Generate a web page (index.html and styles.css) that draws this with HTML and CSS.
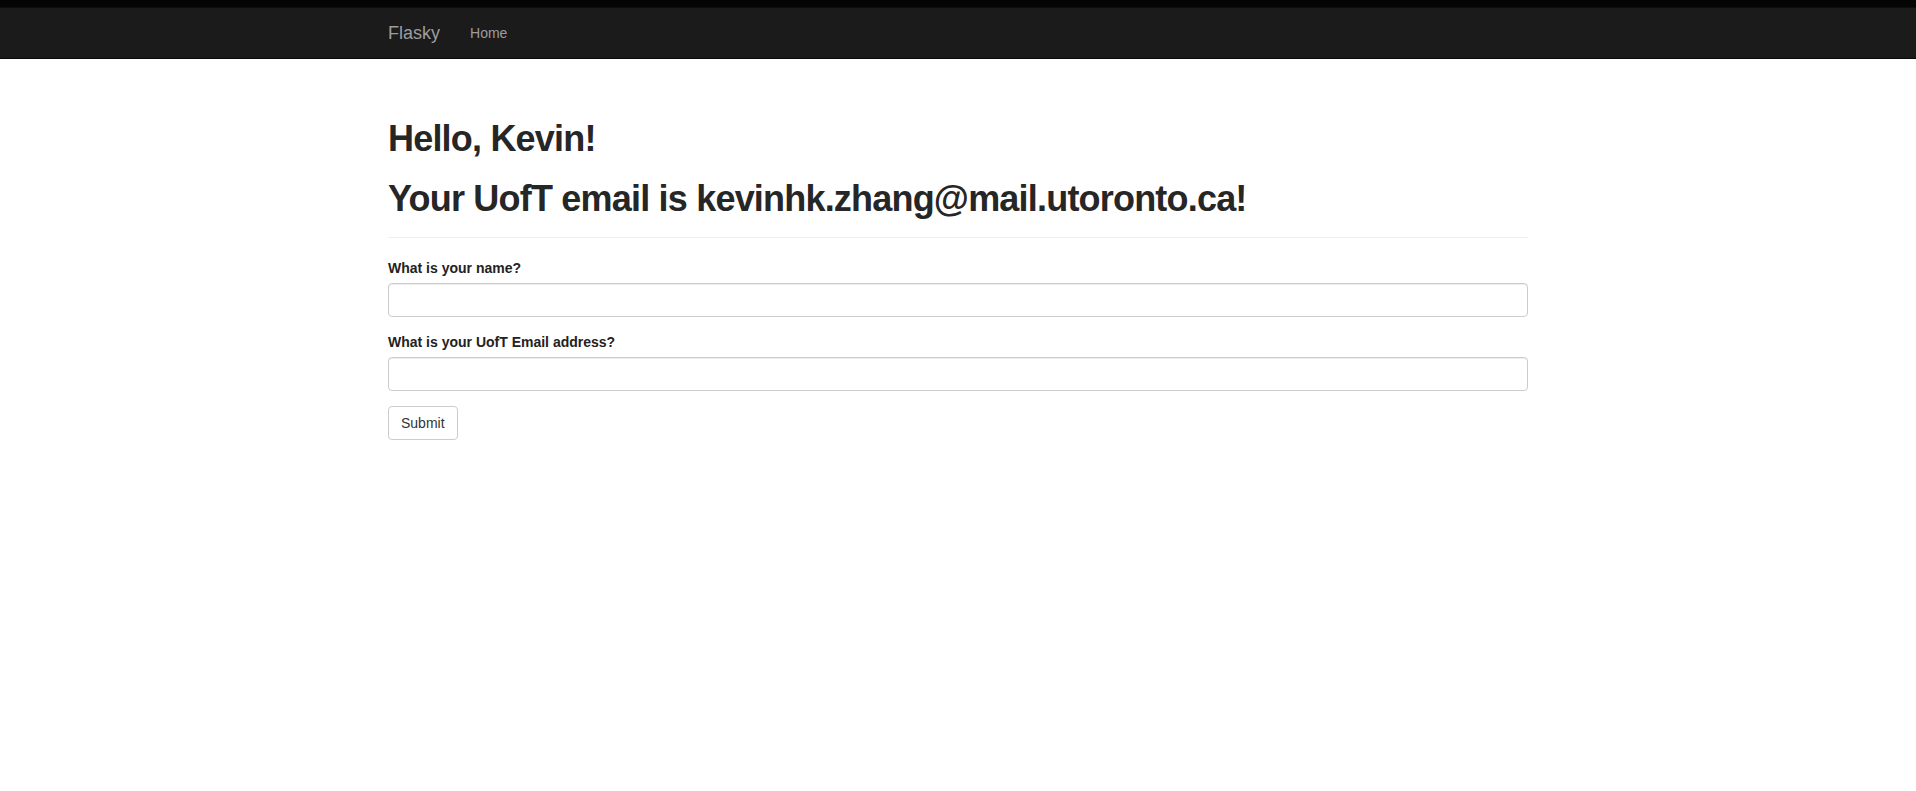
FILE: index.html
```html
<!DOCTYPE html>
<html lang="en">
<head>
<meta charset="utf-8">
<title>Flasky</title>
<link rel="stylesheet" href="styles.css">
</head>
<body>
<div class="topband"></div>
<nav class="navbar">
  <div class="container navbar-inner">
    <a class="brand" href="#">Flasky</a>
    <ul class="nav">
      <li><a href="#">Home</a></li>
    </ul>
  </div>
</nav>
<main class="container content">
  <div class="page-header">
    <h1>Hello, Kevin!</h1>
    <h1>Your UofT email is kevinhk.zhang@mail.utoronto.ca!</h1>
  </div>
  <form class="form">
    <div class="form-group">
      <label class="label" for="name">What is your name?</label>
      <input class="form-control" id="name" type="text">
    </div>
    <div class="form-group">
      <label class="label" for="email">What is your UofT Email address?</label>
      <input class="form-control" id="email" type="text">
    </div>
    <div class="actions">
      <button class="btn" type="button">Submit</button>
    </div>
  </form>
</main>
</body>
</html>
```

FILE: styles.css
```css
* { box-sizing: border-box; }
html, body { margin: 0; padding: 0; }
body {
  font-family: "Liberation Sans", Arial, sans-serif;
  font-size: 14px;
  line-height: 1.42857143;
  color: #333;
  background: #fff;
}
.topband {
  height: 8px;
  background: #050505;
  border-bottom: 1px solid #0e0e0e;
}
.navbar {
  height: 51px;
  background: #1b1b1b;
  border-bottom: 1px solid #080808;
}
.container {
  width: 1170px;
  margin: 0 auto;
  padding: 0 15px;
}
.content {
  display: flow-root;
  padding-top: 20px;
}
.navbar-inner {
  display: flex;
  align-items: stretch;
  height: 50px;
}
.brand {
  display: flex;
  align-items: center;
  font-size: 18px;
  line-height: 20px;
  color: #9d9d9d;
  text-decoration: none;
  padding: 15px 15px 15px 0;
}
.nav {
  list-style: none;
  margin: 0;
  padding: 0;
  display: flex;
}
.nav a {
  display: block;
  padding: 15px;
  line-height: 20px;
  color: #9d9d9d;
  text-decoration: none;
}
.page-header {
  margin: 40px 0 20px;
  padding-bottom: 9px;
  border-bottom: 1px solid #eee;
}
h1 {
  font-family: inherit;
  font-size: 36px;
  font-weight: bold;
  line-height: 1.1;
  letter-spacing: -0.8px;
  margin: 20px 0 10px;
  color: #262626;
}
.page-header h1:first-child { margin-top: 0; }
.form-group { margin-bottom: 15px; }
.label {
  display: inline-block;
  margin-bottom: 5px;
  font-weight: bold;
  color: #222;
}
.form-control {
  display: block;
  width: 100%;
  height: 34px;
  padding: 6px 12px;
  font: inherit;
  color: #555;
  background: #fff;
  border: 1px solid #ccc;
  border-radius: 4px;
  box-shadow: inset 0 1px 1px rgba(0,0,0,.075);
}
.btn {
  display: inline-block;
  height: 34px;
  padding: 6px 12px;
  font: inherit;
  font-size: 14px;
  line-height: 20px;
  color: #333;
  background: #fff;
  border: 1px solid #ccc;
  border-radius: 4px;
}
```
